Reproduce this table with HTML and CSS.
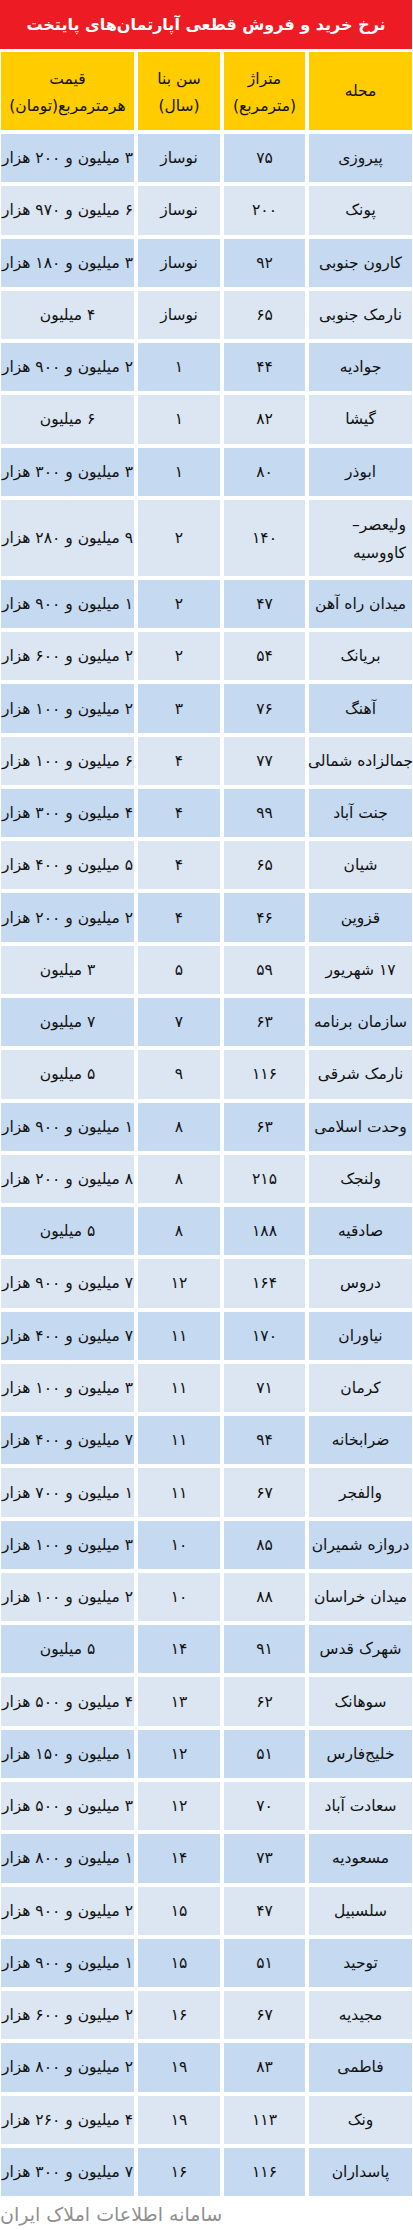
FILE: index.html
```html
<!DOCTYPE html>
<html lang="fa" dir="rtl">
<head>
<meta charset="utf-8">
<title>نرخ خرید و فروش قطعی آپارتمان‌های پایتخت</title>
<link rel="stylesheet" href="styles.css">
</head>
<body>
<div class="page">
  <div class="title">نرخ خرید و فروش قطعی آپارتمان‌های پایتخت</div>
  <div class="table">
    <div class="row head">
      <div class="cell">محله</div>
      <div class="cell two"><span>متراژ</span><span>(مترمربع)</span></div>
      <div class="cell two"><span>سن بنا</span><span>(سال)</span></div>
      <div class="cell two"><span>قیمت</span><span>هرمترمربع(تومان)</span></div>
    </div>
    <div class="row dark"><div class="cell">پیروزی</div><div class="cell">۷۵</div><div class="cell">نوساز</div><div class="cell">۳ میلیون و ۲۰۰ هزار</div></div>
    <div class="row light"><div class="cell">پونک</div><div class="cell">۲۰۰</div><div class="cell">نوساز</div><div class="cell">۶ میلیون و ۹۷۰ هزار</div></div>
    <div class="row dark"><div class="cell">کارون جنوبی</div><div class="cell">۹۲</div><div class="cell">نوساز</div><div class="cell">۳ میلیون و ۱۸۰ هزار</div></div>
    <div class="row light"><div class="cell">نارمک جنوبی</div><div class="cell">۶۵</div><div class="cell">نوساز</div><div class="cell">۴ میلیون</div></div>
    <div class="row dark"><div class="cell">جوادیه</div><div class="cell">۴۴</div><div class="cell">۱</div><div class="cell">۲ میلیون و ۹۰۰ هزار</div></div>
    <div class="row light"><div class="cell">گیشا</div><div class="cell">۸۲</div><div class="cell">۱</div><div class="cell">۶ میلیون</div></div>
    <div class="row dark"><div class="cell">ابوذر</div><div class="cell">۸۰</div><div class="cell">۱</div><div class="cell">۳ میلیون و ۳۰۰ هزار</div></div>
    <div class="row light tall"><div class="cell two right"><span>ولیعصر–</span><span>کاووسیه</span></div><div class="cell">۱۴۰</div><div class="cell">۲</div><div class="cell">۹ میلیون و ۲۸۰ هزار</div></div>
    <div class="row dark"><div class="cell">میدان راه آهن</div><div class="cell">۴۷</div><div class="cell">۲</div><div class="cell">۱ میلیون و ۹۰۰ هزار</div></div>
    <div class="row light"><div class="cell">بریانک</div><div class="cell">۵۴</div><div class="cell">۲</div><div class="cell">۲ میلیون و ۶۰۰ هزار</div></div>
    <div class="row dark"><div class="cell">آهنگ</div><div class="cell">۷۶</div><div class="cell">۳</div><div class="cell">۲ میلیون و ۱۰۰ هزار</div></div>
    <div class="row light"><div class="cell">جمالزاده شمالی</div><div class="cell">۷۷</div><div class="cell">۴</div><div class="cell">۶ میلیون و ۱۰۰ هزار</div></div>
    <div class="row dark"><div class="cell">جنت آباد</div><div class="cell">۹۹</div><div class="cell">۴</div><div class="cell">۴ میلیون و ۳۰۰ هزار</div></div>
    <div class="row light"><div class="cell">شیان</div><div class="cell">۶۵</div><div class="cell">۴</div><div class="cell">۵ میلیون و ۴۰۰ هزار</div></div>
    <div class="row dark"><div class="cell">قزوین</div><div class="cell">۴۶</div><div class="cell">۴</div><div class="cell">۲ میلیون و ۲۰۰ هزار</div></div>
    <div class="row light"><div class="cell">۱۷ شهریور</div><div class="cell">۵۹</div><div class="cell">۵</div><div class="cell">۳ میلیون</div></div>
    <div class="row dark"><div class="cell">سازمان برنامه</div><div class="cell">۶۳</div><div class="cell">۷</div><div class="cell">۷ میلیون</div></div>
    <div class="row light"><div class="cell">نارمک شرقی</div><div class="cell">۱۱۶</div><div class="cell">۹</div><div class="cell">۵ میلیون</div></div>
    <div class="row dark"><div class="cell">وحدت اسلامی</div><div class="cell">۶۳</div><div class="cell">۸</div><div class="cell">۱ میلیون و ۹۰۰ هزار</div></div>
    <div class="row light"><div class="cell">ولنجک</div><div class="cell">۲۱۵</div><div class="cell">۸</div><div class="cell">۸ میلیون و ۲۰۰ هزار</div></div>
    <div class="row dark"><div class="cell">صادقیه</div><div class="cell">۱۸۸</div><div class="cell">۸</div><div class="cell">۵ میلیون</div></div>
    <div class="row light"><div class="cell">دروس</div><div class="cell">۱۶۴</div><div class="cell">۱۲</div><div class="cell">۷ میلیون و ۹۰۰ هزار</div></div>
    <div class="row dark"><div class="cell">نیاوران</div><div class="cell">۱۷۰</div><div class="cell">۱۱</div><div class="cell">۷ میلیون و ۴۰۰ هزار</div></div>
    <div class="row light"><div class="cell">کرمان</div><div class="cell">۷۱</div><div class="cell">۱۱</div><div class="cell">۳ میلیون و ۱۰۰ هزار</div></div>
    <div class="row dark"><div class="cell">ضرابخانه</div><div class="cell">۹۴</div><div class="cell">۱۱</div><div class="cell">۷ میلیون و ۴۰۰ هزار</div></div>
    <div class="row light"><div class="cell">والفجر</div><div class="cell">۶۷</div><div class="cell">۱۱</div><div class="cell">۱ میلیون و ۷۰۰ هزار</div></div>
    <div class="row dark"><div class="cell">دروازه شمیران</div><div class="cell">۸۵</div><div class="cell">۱۰</div><div class="cell">۳ میلیون و ۱۰۰ هزار</div></div>
    <div class="row light"><div class="cell">میدان خراسان</div><div class="cell">۸۸</div><div class="cell">۱۰</div><div class="cell">۲ میلیون و ۱۰۰ هزار</div></div>
    <div class="row dark"><div class="cell">شهرک قدس</div><div class="cell">۹۱</div><div class="cell">۱۴</div><div class="cell">۵ میلیون</div></div>
    <div class="row light"><div class="cell">سوهانک</div><div class="cell">۶۲</div><div class="cell">۱۳</div><div class="cell">۴ میلیون و ۵۰۰ هزار</div></div>
    <div class="row dark"><div class="cell">خلیج‌فارس</div><div class="cell">۵۱</div><div class="cell">۱۲</div><div class="cell">۱ میلیون و ۱۵۰ هزار</div></div>
    <div class="row light"><div class="cell">سعادت آباد</div><div class="cell">۷۰</div><div class="cell">۱۲</div><div class="cell">۳ میلیون و ۵۰۰ هزار</div></div>
    <div class="row dark"><div class="cell">مسعودیه</div><div class="cell">۷۳</div><div class="cell">۱۴</div><div class="cell">۱ میلیون و ۸۰۰ هزار</div></div>
    <div class="row light"><div class="cell">سلسبیل</div><div class="cell">۴۷</div><div class="cell">۱۵</div><div class="cell">۲ میلیون و ۹۰۰ هزار</div></div>
    <div class="row dark"><div class="cell">توحید</div><div class="cell">۵۱</div><div class="cell">۱۵</div><div class="cell">۱ میلیون و ۹۰۰ هزار</div></div>
    <div class="row light"><div class="cell">مجیدیه</div><div class="cell">۶۷</div><div class="cell">۱۶</div><div class="cell">۲ میلیون و ۶۰۰ هزار</div></div>
    <div class="row dark"><div class="cell">فاطمی</div><div class="cell">۸۳</div><div class="cell">۱۹</div><div class="cell">۲ میلیون و ۸۰۰ هزار</div></div>
    <div class="row light"><div class="cell">ونک</div><div class="cell">۱۱۳</div><div class="cell">۱۹</div><div class="cell">۴ میلیون و ۲۶۰ هزار</div></div>
    <div class="row dark"><div class="cell">پاسداران</div><div class="cell">۱۱۶</div><div class="cell">۱۶</div><div class="cell">۷ میلیون و ۳۰۰ هزار</div></div>
  </div>
  <div class="source">سامانه اطلاعات املاک ایران</div>
</div>
</body>
</html>
```

FILE: styles.css
```css
html, body {
  margin: 0;
  padding: 0;
  background: #ffffff;
}

body {
  font-family: "DejaVu Sans", sans-serif;
  color: #111111;
}

.page {
  width: 413px;
  direction: rtl;
}

.title {
  height: 49px;
  margin: 0 1px 3px 0;
  background: #ed1c24;
  color: #ffffff;
  font-weight: bold;
  font-size: 16px;
  display: flex;
  align-items: center;
  justify-content: center;
  white-space: nowrap;
}

.table {
  display: flex;
  flex-direction: column;
  gap: 4px;
  padding: 0 1px;
}

.row {
  display: grid;
  grid-template-columns: 103px 81px 82px 133px;
  column-gap: 4px;
  height: 48.27px;
}

.row.head {
  height: 78px;
}

.row.tall {
  height: 76px;
}

.head .cell {
  background: #ffcc00;
}

.dark .cell {
  background: #c5d9f1;
}

.light .cell {
  background: #dce6f2;
}

.cell {
  display: flex;
  align-items: center;
  justify-content: center;
  font-size: 15.5px;
  white-space: nowrap;
}

.cell.two {
  flex-direction: column;
  line-height: 27px;
  padding-top: 3px;
}

.cell.right {
  align-items: flex-start;
  padding-right: 6px;
  line-height: 28px;
}

.source {
  text-align: left;
  padding-top: 2px;
  height: 32px;
  line-height: 32px;
  font-size: 19px;
  color: #8f8f8f;
}
```
